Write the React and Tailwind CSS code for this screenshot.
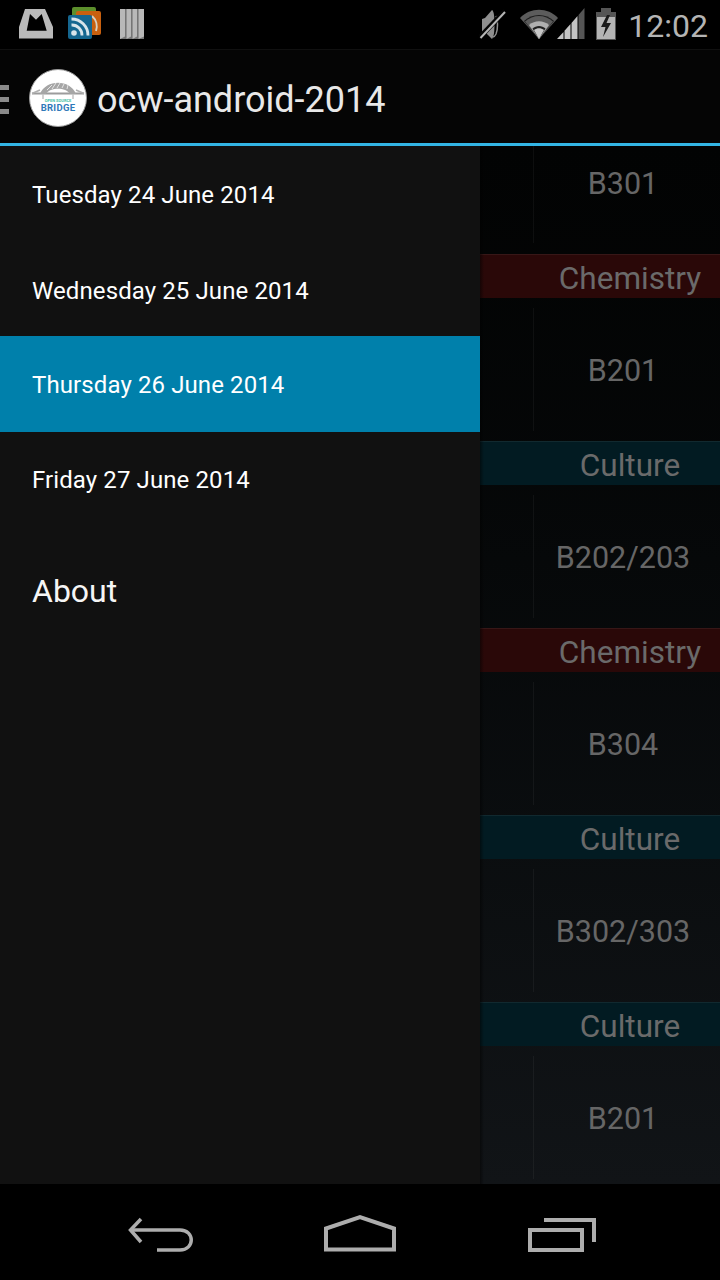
import React from "react";

const font = { fontFamily: "Roboto, sans-serif" };

function Mailbox() {
  return (
    <svg width="34" height="30" viewBox="0 0 34 30" className="block">
      <path fillRule="evenodd" fill="#b9b9b9" d="M6 0 L26 0 L34 18 L34 29.500 L0 29.500 L0 18 Z M11 5 L7.700 21.700 L27.700 21.700 L22.700 5 L17 10.700 Z" />
    </svg>
  );
}

function Rss() {
  return (
    <svg width="34" height="34" viewBox="0 0 34 34" className="block">
      <rect x="4" y="0" width="24" height="16" rx="2" fill="#5c8f2c" />
      <rect x="8" y="4" width="25" height="24" rx="2" fill="#c8600f" />
      <path d="M24 9 A14 14 0 0 1 28 24" stroke="#d8d0c0" strokeWidth="2" fill="none" />
      <rect x="0" y="8" width="24" height="24" rx="2" fill="#15668f" />
      <circle cx="6" cy="26" r="2.800" fill="#d8e4ea" />
      <path d="M3.500 18 A10 10 0 0 1 14 28.500" stroke="#d8e4ea" strokeWidth="2.800" fill="none" />
      <path d="M3.500 12 A16.500 16.500 0 0 1 20 28.500" stroke="#d8e4ea" strokeWidth="2.800" fill="none" />
    </svg>
  );
}

function Books() {
  return (
    <svg width="24" height="30" viewBox="0 0 24 30" className="block">
      <rect x="0" y="0" width="24" height="30" fill="#b8b8b8" />
      <path d="M5.800 0V30M11.800 0V30M17.800 0V30" stroke="#727272" strokeWidth="1.500" />
      <path d="M0 30 L5 27.500 L5 30Z M6.500 30 L11 27.500 L11 30Z M12.500 30 L17 27.500 L17 30Z M18.500 30 L24 27.500 L24 30Z" fill="#777" />
    </svg>
  );
}

function Muted() {
  return (
    <svg width="28" height="34" viewBox="0 0 28 34" className="block">
      <path d="M6 11 L13 3 C15 4 15.500 10 15.500 17 C15.500 24 15 30 13 32 L6 25 L3 25 L3 12Z" fill="#8f8f8f" />
      <path d="M17 9 C19 13 19 22 17 27 C15.500 30 14.500 30 14 30" stroke="#8f8f8f" strokeWidth="1.500" fill="none" />
      <path d="M1 30 L26 4" stroke="#050505" strokeWidth="5" />
      <path d="M1.500 31 L26 5" stroke="#b5b5b5" strokeWidth="2" />
    </svg>
  );
}

function Wifi() {
  return (
    <svg width="38" height="30" viewBox="0 0 38 30" className="block">
      <path d="M0 9 C10 -2 28 -2 38 9 L19 30Z" fill="#5c5c5c" />
      <path d="M4 12 C12 4 26 4 34 12 L19 30Z" fill="#1c1c1c" />
      <path d="M5 12.500 C13 5 25 5 33 12.500 L19 30Z" fill="#5c5c5c" />
      <path d="M9 16 C15 11 23 11 29 16 L19 30Z" fill="#b0b0b0" />
      <path d="M12.500 19.500 C16 16 22 16 25.500 19.500 L19 30Z" fill="#222222" />
      <path d="M14 21 C17 18.500 21 18.500 24 21 L19 30Z" fill="#c8c8c8" />
    </svg>
  );
}

function Signal() {
  return (
    <svg width="28" height="32" viewBox="0 0 28 32" className="block">
      <path d="M21.500 7 L27.500 0 L27.500 31 L21.500 31Z" fill="#555" />
      <path d="M0 31 L6.500 24 L6.500 31Z M7.500 31 L7.500 22.800 L13.500 16 L13.500 31Z M14.500 31 L14.500 15 L20.500 8 L20.500 31Z" fill="#c4c4c4" />
    </svg>
  );
}

function Battery() {
  return (
    <svg width="20" height="32" viewBox="0 0 20 32" className="block">
      <rect x="5" y="0" width="10" height="4" fill="#555" />
      <rect x="0" y="4" width="20" height="28" fill="#555" />
      <rect x="1" y="9" width="18" height="22" fill="#b4b4b4" />
      <path d="M11 7 L5 19 L9.500 19 L7 29 L15 15 L10.500 15 L14 7Z" fill="#1a1a1a" />
    </svg>
  );
}

function StatusBar() {
  return (
    <div className="flex h-[50px] items-center border-b border-[#101010] bg-black pl-[19px] pr-[12px]">
      <div className="mt-[-1px]"><Mailbox /></div>
      <div className="ml-[15px] mt-[-1px]"><Rss /></div>
      <div className="ml-[18px] mt-[-1px]"><Books /></div>
      <div className="ml-auto mt-[-2px]"><Muted /></div>
      <div className="ml-[13px] mt-[-2px]"><Wifi /></div>
      <div className="ml-[-1px] mt-[-2px]"><Signal /></div>
      <div className="ml-[11px] mt-[-2px]"><Battery /></div>
      <div className="ml-[12px] mt-[2px] text-[32px] leading-none text-[#b4b4b4]">12:02</div>
    </div>
  );
}

function Logo() {
  return (
    <div className="flex h-[58px] w-[58px] flex-col items-center justify-center rounded-full border border-[#9a9a9a] bg-white">
      <svg width="54" height="22" viewBox="0 0 54 22" className="mt-[-5px] block">
        <path d="M1 14.500 L53 14.500" stroke="#9c9c9c" strokeWidth="2" />
        <path d="M9 15 C15 0 39 0 45 15 L39 15 C35 8 19 8 15 15 Z" fill="#a6a6a6" />
        <path d="M16 11 L21 6 M21 10 L25 4 M26 9 L29 4 M31 9 L33 5 M36 10 L37 6" stroke="#e6e6e6" strokeWidth="1" />
        <path d="M1 14.500 L9 11 M53 14.500 L45 11" stroke="#b0b0b0" strokeWidth="1.500" />
        <path d="M12 15V20M42 15V20" stroke="#c4c4c4" strokeWidth="1.500" />
      </svg>
      <div className="mt-[-2px] text-[4px] font-bold leading-[4px] text-[#45bfa8]">OPEN SOURCE</div>
      <div className="text-[9.5px] font-bold leading-[10px] tracking-[0.3px] text-[#2f79b9]">BRIDGE</div>
    </div>
  );
}

function ActionBar() {
  return (
    <div className="flex h-[93px] items-center bg-[#050505] pt-[5px]">
      <div className="flex w-[9px] flex-col gap-[7px]">
        <div className="h-[5px] bg-[#8a8a8a]" />
        <div className="h-[5px] bg-[#8a8a8a]" />
        <div className="h-[5px] bg-[#8a8a8a]" />
      </div>
      <div className="ml-[20px] mt-[-2px]"><Logo /></div>
      <div className="ml-[10px] mt-[2px] text-[36px] leading-none text-[#e8e8e8]">ocw-android-2014</div>
    </div>
  );
}

function DrawerItem({ label, h, active }) {
  return (
    <div className={`flex items-center pl-[32px] text-[24px] tracking-[0.1px] text-white ${h} ${active ? "bg-[#0080ab]" : ""}`}>
      {label}
    </div>
  );
}

function Drawer() {
  return (
    <div className="w-[480px] shrink-0 bg-[#111111]">
      <DrawerItem label="Tuesday 24 June 2014" h="h-[97px]" />
      <DrawerItem label="Wednesday 25 June 2014" h="h-[93px] pt-[2px]" />
      <DrawerItem label="Thursday 26 June 2014" h="h-[96px] pt-[2px]" active />
      <DrawerItem label="Friday 27 June 2014" h="h-[96px]" />
      <div className="flex h-[126px] items-center pl-[32px] text-[32px] text-[#f5f5f5]">About</div>
    </div>
  );
}

function Session({ room, tall }) {
  return (
    <div className={`flex ${tall ? "h-[143px] py-[10px]" : "h-[108px] pb-[11px]"}`}>
      <div className="w-[53px] shrink-0" />
      <div className="flex flex-1 items-center justify-center border-l border-[#ffffff0c] pr-[8px] text-[30.5px] text-[#666666]">
        <span className={tall ? "mt-[2px]" : "mt-[-22px]"}>{room}</span>
      </div>
    </div>
  );
}

function Heading({ label, bg }) {
  return (
    <div className={`flex h-[44px] items-center justify-center border-t border-[#ffffff10] pl-[60px] pt-[5px] text-[31.5px] text-[#6a6a6a] ${bg}`}>
      {label}
    </div>
  );
}

function Schedule() {
  return (
    <div className="relative min-w-0 flex-1 overflow-hidden bg-gradient-to-b from-[#020303] to-[#111417]">
      <Session room="B301" />
      <Heading label="Chemistry" bg="bg-[#2a0808]" />
      <Session room="B201" tall />
      <Heading label="Culture" bg="bg-[#021b22]" />
      <Session room="B202/203" tall />
      <Heading label="Chemistry" bg="bg-[#2a0808]" />
      <Session room="B304" tall />
      <Heading label="Culture" bg="bg-[#021b22]" />
      <Session room="B302/303" tall />
      <Heading label="Culture" bg="bg-[#021b22]" />
      <Session room="B201" tall />
      <div className="absolute inset-y-0 left-0 w-[4px] bg-gradient-to-r from-[#00000080] to-transparent" />
    </div>
  );
}

function NavBar() {
  return (
    <div className="relative flex h-[96px] items-center bg-black">
      <svg width="720" height="96" viewBox="0 0 720 96" className="block">
        <g fill="none" stroke="#adadad" strokeWidth="4">
          <path d="M130 46 L180 46 C195 46 195 66 180 66 L157 66" strokeWidth="3.500" />
          <path d="M141 35 L130.500 46 L141 58" strokeWidth="3.500" />
          <path d="M326 65.500 L326 44.500 L360 33 L394 44.500 L394 65.500 Z" />
          <path d="M530 46 L582 46 L582 66 L530 66 Z" />
          <path d="M544 36 L594 36 L594 58" />
        </g>
      </svg>
    </div>
  );
}

export default function App() {
  return (
    <div className="flex h-[1280px] w-[720px] flex-col overflow-hidden bg-black" style={font}>
      <StatusBar />
      <ActionBar />
      <div className="h-[3px] bg-[#33b5e5]" />
      <div className="flex h-[1038px]">
        <Drawer />
        <Schedule />
      </div>
      <NavBar />
    </div>
  );
}
